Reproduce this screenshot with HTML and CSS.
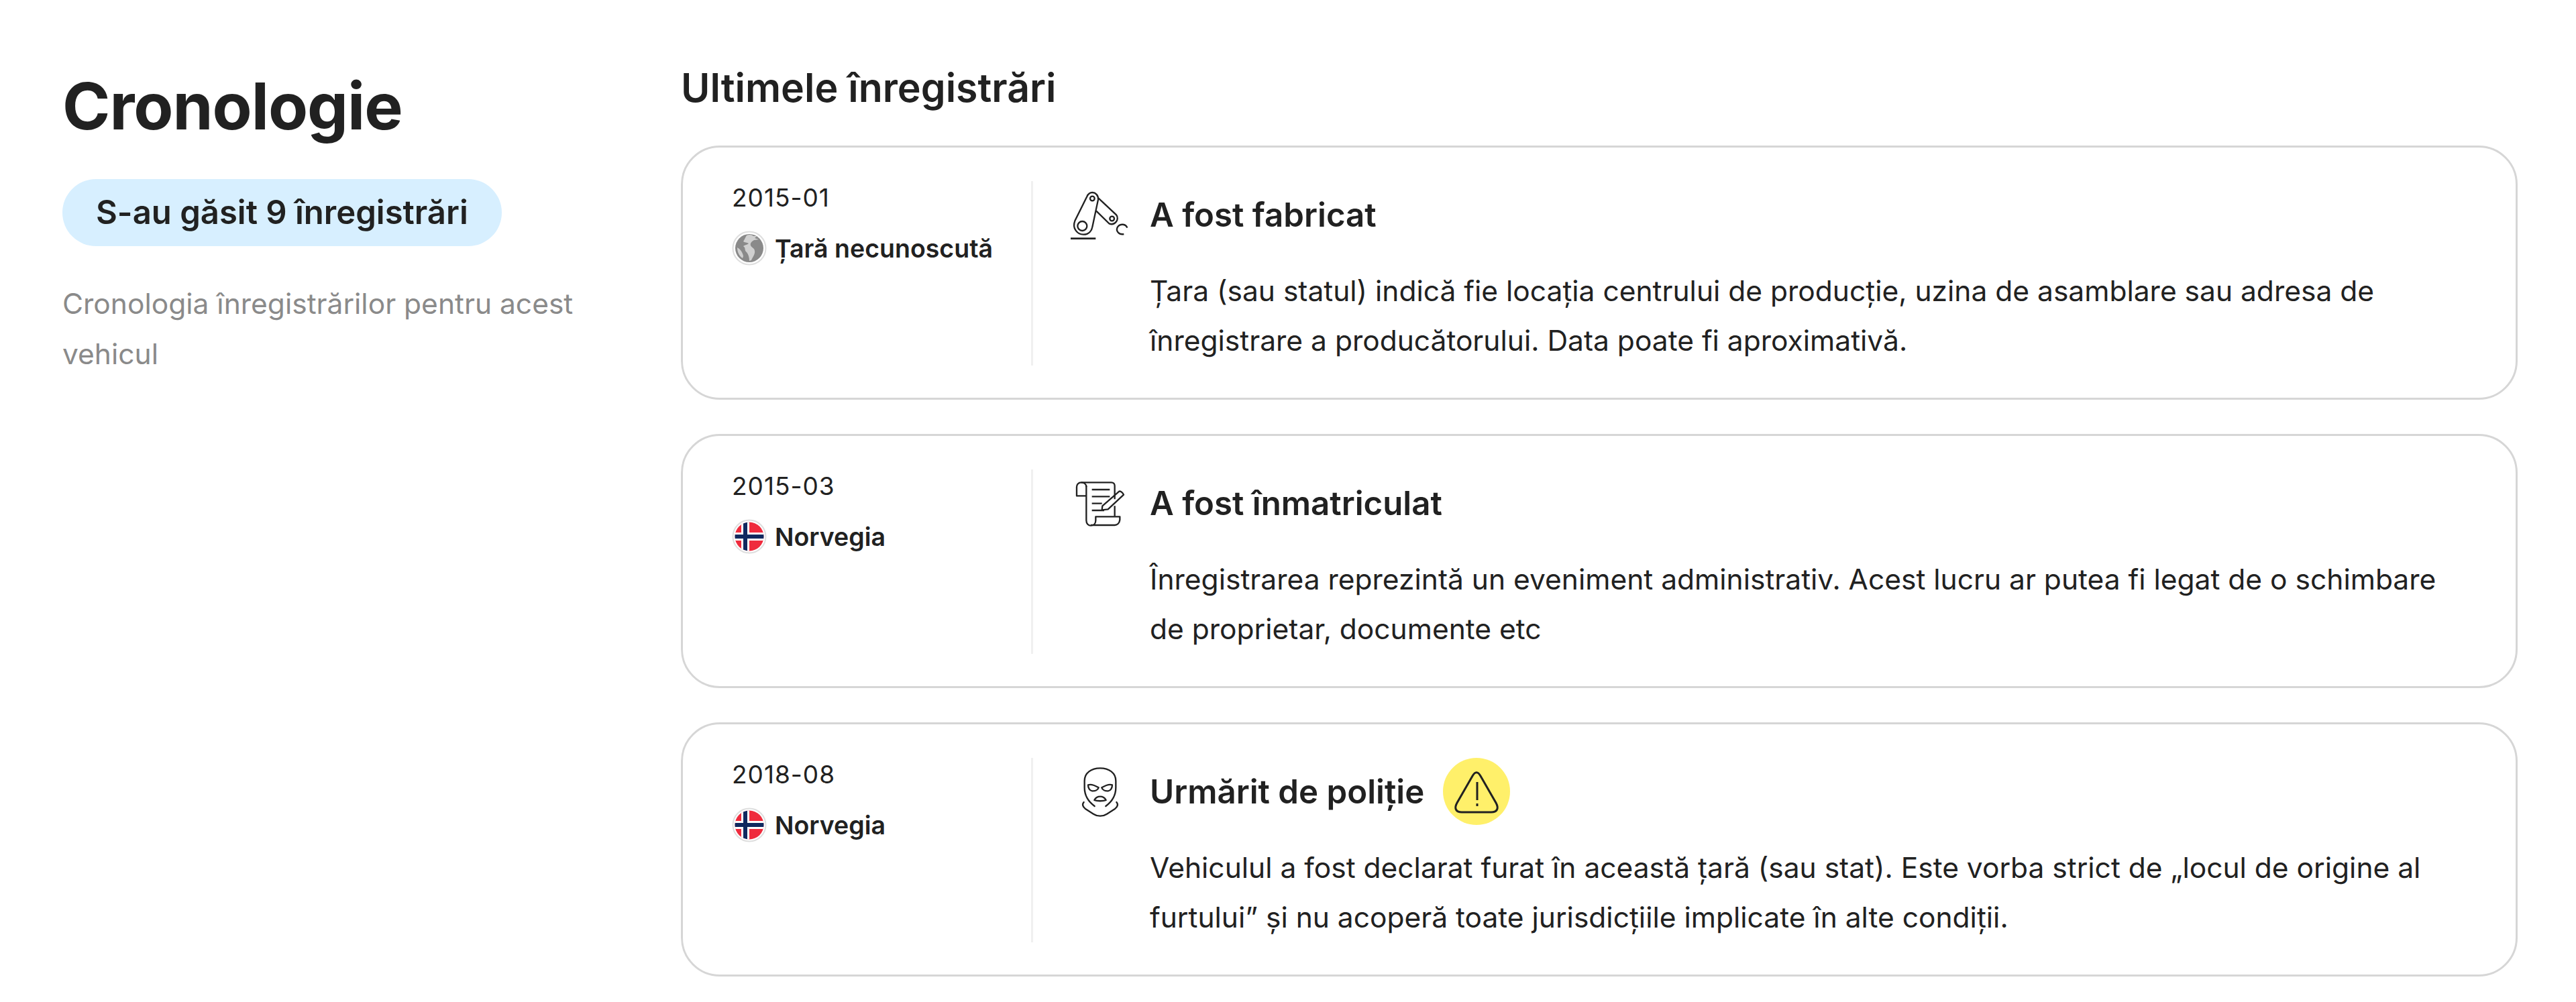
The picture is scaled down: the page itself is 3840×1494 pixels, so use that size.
FILE: index.html
```html
<!DOCTYPE html>
<html lang="ro">
<head>
    <meta charset="UTF-8">
    <meta name="viewport" content="width=device-width, initial-scale=1.0">
    <title>Cronologie</title>
    <link rel="stylesheet" href="styles.css">
</head>
<body>
    <main class="page">
        <aside class="intro">
            <h1>Cronologie</h1>
            <div class="pill">S-au găsit 9 înregistrări</div>
            <p class="intro-text">Cronologia înregistrărilor pentru acest vehicul</p>
        </aside>

        <section class="records">
            <h2>Ultimele înregistrări</h2>

            <!-- Fabricat -->
            <article class="card">
                <div class="meta">
                    <div class="date">2015-01</div>
                    <div class="country">
                        <svg class="flag" viewBox="0 0 52 52">
                            <circle cx="26" cy="26" r="24.5" fill="#fff" stroke="#dedede" stroke-width="2"/>
                            <circle cx="26" cy="26" r="21" fill="#8a8a8a"/>
                            <path d="M22 7c4-2 8-1 10 1l5 0-3 3 6 2-7 1c-3 2-6 4-5 8 1 3 6 4 6 8 1 5-3 9-5 14l-3 1c0-5-1-9-4-13-3-2-2-5-3-7l-2-2c3-2 6-2 8-4-3-2-6-1-8-3 2-3 3-6 5-9z" fill="#d0d0d0"/>
                            <path d="M8 25c4 2 8 7 9 13l-1 3c-5-3-8-9-8-16z" fill="#d0d0d0"/>
                        </svg>
                        <span>Țară necunoscută</span>
                    </div>
                </div>
                <div class="body">
                    <div class="head">
                        <svg class="icon" viewBox="90 27 288 300" fill="none" stroke="#212121" stroke-width="7">
                            <path d="M108 284H220" stroke-width="8"/>
                            <path d="M181 96L127 205C113 240 140 266 165 266C190 266 203 248 206 228L231 110C233 90 218 78 205 78C194 78 186 85 181 96Z"/>
                            <circle cx="160" cy="228" r="21"/>
                            <circle cx="205" cy="105" r="10"/>
                            <path d="M232 103L312 178C328 198 305 228 280 217L222 160"/>
                            <circle cx="293" cy="195" r="10"/>
                            <path d="M361 236C355 218 330 216 318 232C308 250 324 268 346 264"/>
                        </svg>
                        <h3>A fost fabricat</h3>
                    </div>
                    <p class="desc">Țara (sau statul) indică fie locația centrului de producție, uzina de asamblare sau adresa de înregistrare a producătorului. Data poate fi aproximativă.</p>
                </div>
            </article>

            <!-- Inmatriculat -->
            <article class="card">
                <div class="meta">
                    <div class="date">2015-03</div>
                    <div class="country">
                        <svg class="flag" viewBox="0 0 52 52">
                            <circle cx="26" cy="26" r="24.5" fill="#fff" stroke="#dedede" stroke-width="2"/>
                            <clipPath id="no1"><circle cx="26" cy="26" r="21.5"/></clipPath>
                            <g clip-path="url(#no1)">
                                <rect width="52" height="52" fill="#ef2b3d"/>
                                <path d="M20 0V52M0 26H52" stroke="#fff" stroke-width="12"/>
                                <path d="M20 0V52M0 26H52" stroke="#10295f" stroke-width="6"/>
                            </g>
                        </svg>
                        <span>Norvegia</span>
                    </div>
                </div>
                <div class="body">
                    <div class="head">
                        <svg class="icon" viewBox="90 27 288 300" fill="none" stroke="#212121" stroke-width="7" stroke-linejoin="round">
                            <path d="M178 105C178 92 168 85 155 85C142 85 135 95 135 105V145H178"/>
                            <path d="M155 85H290C300 85 305 92 305 100V160M305 190V236"/>
                            <path d="M178 100V255C178 270 188 278 198 278C212 278 220 268 220 255V238H328V252C326 268 316 276 305 276H198"/>
                            <path d="M203 117H283M203 148H283M203 179H248M203 210H258"/>
                            <path d="M250 190L325 125C332 122 342 132 345 140L275 205L248 208Z"/>
                        </svg>
                        <h3>A fost înmatriculat</h3>
                    </div>
                    <p class="desc">Înregistrarea reprezintă un eveniment administrativ. Acest lucru ar putea fi legat de o schimbare de proprietar, documente etc</p>
                </div>
            </article>

            <!-- Urmarit -->
            <article class="card">
                <div class="meta">
                    <div class="date">2018-08</div>
                    <div class="country">
                        <svg class="flag" viewBox="0 0 52 52">
                            <circle cx="26" cy="26" r="24.5" fill="#fff" stroke="#dedede" stroke-width="2"/>
                            <clipPath id="no2"><circle cx="26" cy="26" r="21.5"/></clipPath>
                            <g clip-path="url(#no2)">
                                <rect width="52" height="52" fill="#ef2b3d"/>
                                <path d="M20 0V52M0 26H52" stroke="#fff" stroke-width="12"/>
                                <path d="M20 0V52M0 26H52" stroke="#10295f" stroke-width="6"/>
                            </g>
                        </svg>
                        <span>Norvegia</span>
                    </div>
                </div>
                <div class="body">
                    <div class="head">
                        <svg class="icon" viewBox="0 -3 288 300" fill="none" stroke="#212121" stroke-width="7" stroke-linejoin="round" stroke-linecap="round">
                            <path d="M125 213C100 195 80 170 80 130V100C80 65 110 43 150 43C190 43 220 65 220 100V130C220 170 200 195 175 213"/>
                            <path d="M77 195C68 205 72 216 85 226L120 248C138 260 162 260 180 248L215 226C228 216 232 205 223 195"/>
                            <path d="M96 118C110 113 130 122 143 130C140 140 128 146 114 145C103 144 96 132 96 118Z"/>
                            <path d="M204 118C190 113 170 122 157 130C160 140 172 146 186 145C197 144 204 132 204 118Z"/>
                            <path d="M124 186C130 174 142 170 150 170C158 170 170 174 176 186C165 191 135 191 124 186Z"/>
                        </svg>
                        <h3>Urmărit de poliție</h3>
                        <span class="warn">
                            <svg viewBox="0 0 100 100" width="100" height="100" fill="none" stroke="#212121" stroke-width="3">
                                <path d="M44 27L21 67C16 76 20 81 28 81H72C80 81 84 76 79 67L56 27C52 20 48 20 44 27Z"/>
                                <path d="M51 36V63M51 68V72"/>
                            </svg>
                        </span>
                    </div>
                    <p class="desc">Vehiculul a fost declarat furat în această țară (sau stat). Este vorba strict de „locul de origine al furtului” și nu acoperă toate jurisdicțiile implicate în alte condiții.</p>
                </div>
            </article>
        </section>
    </main>
</body>
</html>
```

FILE: styles.css
```css
body {
    margin: 0;
    background-color: #fff;
    color: #212121;
    font-family: "Inter", "Liberation Sans", sans-serif;
}
.page {
    display: grid;
    grid-template-columns: 922px 2738px;
    padding: 93px 0 0 93px;
    height: 1401px;
    overflow: hidden;
}
h1 {
    margin: 0;
    font-size: 96.5px;
    font-weight: 700;
    line-height: 130px;
    letter-spacing: -1px;
}
.pill {
    display: inline-block;
    margin-top: 44px;
    padding: 0 50px;
    height: 100px;
    line-height: 100px;
    border-radius: 50px;
    background-color: #d7efff;
    font-size: 49px;
    font-weight: 600;
}
.intro-text {
    margin: 48px 0 0;
    width: 800px;
    color: #8a8a8a;
    font-size: 42.5px;
    line-height: 75px;
}
.records {
    display: flex;
    flex-direction: column;
    gap: 51px;
}
h2 {
    margin: 0 0 -2px;
    font-size: 59px;
    font-weight: 600;
    line-height: 75px;
}
.card {
    display: grid;
    grid-template-columns: 446px 1fr;
    padding: 50px 90px 48px 73px;
    border: 3px solid #d6d6d6;
    border-radius: 58px;
}
.date {
    margin-top: 2px;
    font-size: 37px;
    line-height: 46px;
    letter-spacing: 1px;
}
.country {
    display: flex;
    align-items: center;
    gap: 12px;
    margin-top: 26px;
    font-size: 37.5px;
    font-weight: 600;
}
.flag {
    width: 52px;
    height: 52px;
}
.body {
    padding-left: 50px;
    border-left: 3px solid #f0f0f0;
}
.head {
    display: flex;
    align-items: center;
    gap: 28px;
    height: 100px;
}
.icon {
    width: 96px;
    height: 100px;
}
h3 {
    margin: 0;
    font-size: 49.2px;
    font-weight: 600;
}
.warn {
    display: flex;
    width: 100px;
    height: 100px;
    border-radius: 50%;
    background-color: #fff06a;
}
.desc {
    margin: 27px 0 0 124px;
    font-size: 42.5px;
    line-height: 74px;
}
```
